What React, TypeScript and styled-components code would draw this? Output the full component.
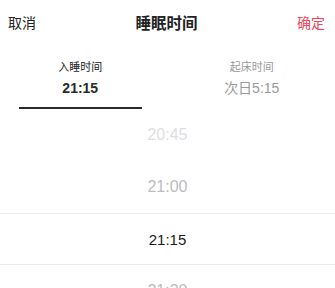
import styled, { createGlobalStyle } from "styled-components";

const GlobalStyle = createGlobalStyle`
  html, body {
    margin: 0;
    padding: 0;
    background: #ffffff;
  }
  body {
    font-family: "Liberation Sans", "Noto Sans CJK SC", sans-serif;
    -webkit-font-smoothing: antialiased;
  }
`;

const Sheet = styled.div`
  width: 335px;
  height: 288px;
  overflow: hidden;
  background: #fff;
  display: flex;
  flex-direction: column;
`;

const Header = styled.div`
  flex-shrink: 0;
  height: 43px;
  display: flex;
  align-items: center;
  justify-content: space-between;
  padding: 0 10px 0 8px;
`;

const HeaderAction = styled.span<{ $primary?: boolean }>`
  font-size: 14px;
  color: ${(p) => (p.$primary ? "#f0455a" : "#222")};
  width: 40px;
  text-align: ${(p) => (p.$primary ? "right" : "left")};
`;

const Title = styled.span`
  font-size: 15.5px;
  font-weight: bold;
  color: #222;
`;

const Tabs = styled.div`
  flex-shrink: 0;
  display: grid;
  grid-template-columns: 1fr 1fr;
`;

const Tab = styled.div<{ $active?: boolean }>`
  display: flex;
  flex-direction: column;
  align-items: center;
  padding-top: 16px;
  padding-right: ${(p) => (p.$active ? "7px" : "0")};
  padding-left: ${(p) => (p.$active ? "0" : "1px")};
`;

const TabLabel = styled.div<{ $active?: boolean }>`
  font-size: 11px;
  line-height: 16px;
  color: ${(p) => (p.$active ? "#222" : "#999")};
`;

const TabValue = styled.div<{ $active?: boolean }>`
  margin-top: 3px;
  font-size: 14px;
  line-height: 20px;
  font-weight: ${(p) => (p.$active ? 600 : 400)};
  color: ${(p) => (p.$active ? "#2a2a2a" : "#999")};
`;

const Underline = styled.div<{ $active?: boolean }>`
  margin-top: 9px;
  width: 123px;
  height: 2px;
  background: ${(p) => (p.$active ? "#2a2a2a" : "transparent")};
`;

const Picker = styled.div`
  display: flex;
  flex-direction: column;
`;

const Row = styled.div<{ $tone: "faint" | "light" | "selected" }>`
  box-sizing: border-box;
  height: 52px;
  flex-shrink: 0;
  display: flex;
  align-items: center;
  justify-content: center;
  font-size: ${(p) => (p.$tone === "selected" ? "15px" : "16px")};
  color: ${(p) =>
    p.$tone === "selected" ? "#1a1a1a" : p.$tone === "light" ? "#bdbdbd" : "#dedede"};
  border-top: ${(p) => (p.$tone === "selected" ? "1px solid #ececec" : "none")};
  border-bottom: ${(p) => (p.$tone === "selected" ? "1px solid #ececec" : "none")};
`;

const rows: { time: string; tone: "faint" | "light" | "selected" }[] = [
  { time: "20:45", tone: "faint" },
  { time: "21:00", tone: "light" },
  { time: "21:15", tone: "selected" },
  { time: "21:30", tone: "light" },
];

export default function App() {
  return (
    <>
      <GlobalStyle />
      <Sheet>
        <Header>
          <HeaderAction>取消</HeaderAction>
          <Title>睡眠时间</Title>
          <HeaderAction $primary>确定</HeaderAction>
        </Header>
        <Tabs>
          <Tab $active>
            <TabLabel $active>入睡时间</TabLabel>
            <TabValue $active>21:15</TabValue>
            <Underline $active />
          </Tab>
          <Tab>
            <TabLabel>起床时间</TabLabel>
            <TabValue>次日5:15</TabValue>
            <Underline />
          </Tab>
        </Tabs>
        <Picker>
          {rows.map((r) => (
            <Row key={r.time} $tone={r.tone}>
              {r.time}
            </Row>
          ))}
        </Picker>
      </Sheet>
    </>
  );
}
